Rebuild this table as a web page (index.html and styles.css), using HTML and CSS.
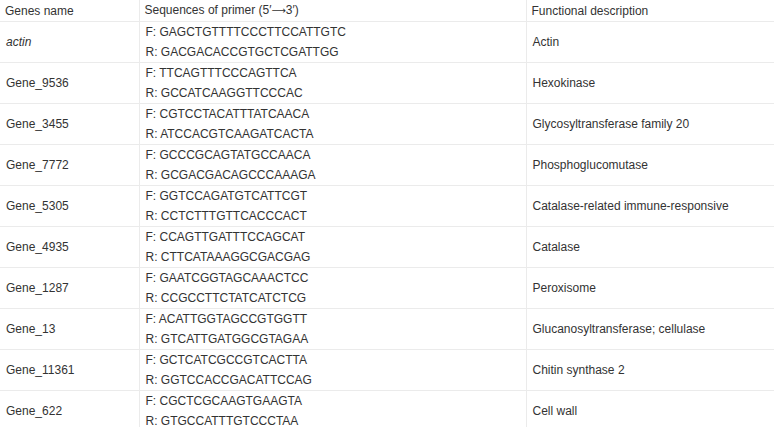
FILE: index.html
```html
<!DOCTYPE html>
<html>
<head>
<meta charset="utf-8">
<link rel="stylesheet" href="styles.css">
</head>
<body>
<table class="tbl">
  <colgroup>
    <col class="c1"><col class="c2"><col class="c3">
  </colgroup>
  <thead>
    <tr><th>Genes name</th><th>Sequences of primer (5′<span class="arrow">⟶</span>3′)</th><th>Functional description</th></tr>
  </thead>
  <tbody>
    <tr><td><i>actin</i></td><td><div>F: GAGCTGTTTTCCCTTCCATTGTC</div><div>R: GACGACACCGTGCTCGATTGG</div></td><td>Actin</td></tr>
    <tr><td>Gene_9536</td><td><div>F: TTCAGTTTCCCAGTTCA</div><div>R: GCCATCAAGGTTCCCAC</div></td><td>Hexokinase</td></tr>
    <tr><td>Gene_3455</td><td><div>F: CGTCCTACATTTATCAACA</div><div>R: ATCCACGTCAAGATCACTA</div></td><td>Glycosyltransferase family 20</td></tr>
    <tr><td>Gene_7772</td><td><div>F: GCCCGCAGTATGCCAACA</div><div>R: GCGACGACAGCCCAAAGA</div></td><td>Phosphoglucomutase</td></tr>
    <tr><td>Gene_5305</td><td><div>F: GGTCCAGATGTCATTCGT</div><div>R: CCTCTTTGTTCACCCACT</div></td><td>Catalase-related immune-responsive</td></tr>
    <tr><td>Gene_4935</td><td><div>F: CCAGTTGATTTCCAGCAT</div><div>R: CTTCATAAAGGCGACGAG</div></td><td>Catalase</td></tr>
    <tr><td>Gene_1287</td><td><div>F: GAATCGGTAGCAAACTCC</div><div>R: CCGCCTTCTATCATCTCG</div></td><td>Peroxisome</td></tr>
    <tr><td>Gene_13</td><td><div>F: ACATTGGTAGCCGTGGTT</div><div>R: GTCATTGATGGCGTAGAA</div></td><td>Glucanosyltransferase; cellulase</td></tr>
    <tr><td>Gene_11361</td><td><div>F: GCTCATCGCCGTCACTTA</div><div>R: GGTCCACCGACATTCCAG</div></td><td>Chitin synthase 2</td></tr>
    <tr><td>Gene_622</td><td><div>F: CGCTCGCAAGTGAAGTA</div><div>R: GTGCCATTTGTCCCTAA</div></td><td>Cell wall</td></tr>
  </tbody>
</table>
</body>
</html>
```
FILE: styles.css
```css
html, body {
  margin: 0;
  padding: 0;
  background: #fff;
}
body {
  font-family: "Liberation Sans", Arial, sans-serif;
  font-size: 12px;
  color: #333;
}
.tbl {
  border-collapse: collapse;
  width: 774px;
  table-layout: fixed;
}
.c1 { width: 139px; }
.c2 { width: 387px; }
.c3 { width: 248px; }
.arrow {
  font-family: "DejaVu Sans", sans-serif;
  font-size: 10px;
}
.tbl th {
  font-weight: normal;
  text-align: left;
  height: 20px;
  line-height: 20px;
  padding: 0 5px;
  vertical-align: middle;
  border-bottom: 1px solid #ebebeb;
  border-left: 1px solid #ebebeb;
}
.tbl td {
  padding: 0 5px 0 6px;
  line-height: 20px;
  height: 40px;
  vertical-align: middle;
  border-bottom: 1px solid #ebebeb;
  border-left: 1px solid #ebebeb;
}
.tbl th:first-child, .tbl td:first-child {
  border-left: none;
}
```
